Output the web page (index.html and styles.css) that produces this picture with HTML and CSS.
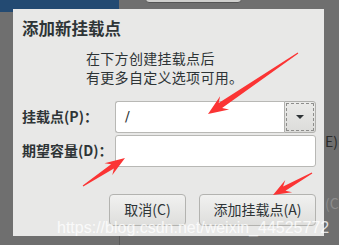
FILE: index.html
```html
<!DOCTYPE html>
<html lang="zh-CN">
<head>
    <meta charset="UTF-8">
    <title>添加新挂载点</title>
    <link rel="stylesheet" href="styles.css">
</head>
<body>
  <div class="desk">
    <!-- bits of the window underneath -->
    <div class="bg-bar"></div>
    <div class="bg-tab"></div>
    <div class="bg-line"></div>
    <span class="bg-text bg-e">E)</span>
    <span class="bg-text bg-c">(C</span>

    <div class="dialog">
      <h1 class="title">添加新挂载点</h1>
      <p class="intro">在下方创建挂载点后<br>有更多自定义选项可用。</p>

      <div class="form">
        <label class="label">挂载点(P)：</label>
        <div class="combo">
          <div class="combo-entry">/</div>
          <div class="combo-btn"><span class="caret"></span></div>
        </div>
        <label class="label">期望容量(D)：</label>
        <div class="entry"></div>
      </div>

      <div class="actions">
        <button class="btn btn-cancel">取消(C)</button>
        <button class="btn btn-add">添加挂载点(A)</button>
      </div>
    </div>

    <svg class="marks" width="339" height="245" viewBox="0 0 339 245">
      <polygon points="297.7,52.6 218.7,103.1 220.1,96.2 208,114 229.1,109.4 222.1,108.1 298.3,53.4" />
      <polygon points="83.3,186.4 113.9,168.4 112.3,174.9 125,158 104.5,163.3 111.1,164.2 82.7,185.6" />
      <polygon points="311.8,172.6 283.1,186.4 285.3,180.1 273,195 292.1,192.3 285.5,190.8 312.3,173.4" />
    </svg>

    <div class="watermark">https://blog.csdn.net/weixin_44525772</div>
  </div>
</body>
</html>
```

FILE: styles.css
```css
html, body {
    margin: 0;
    padding: 0;
  }

  body {
    font-family: "Noto Sans CJK SC", "DejaVu Sans", sans-serif;
    color: #2e3436;
  }

  .desk {
    position: relative;
    width: 339px;
    height: 245px;
    overflow: hidden;
    background: #6f6f6f;
  }

  .bg-bar {
    position: absolute;
    left: 0;
    top: 0;
    width: 119px;
    height: 12px;
    background: #234a72;
  }

  .bg-tab {
    position: absolute;
    left: 145px;
    top: -30px;
    width: 95px;
    height: 31px;
    border: 1px solid #555;
    border-radius: 4px;
    background: #cfcfcd;
  }

  .bg-line {
    position: absolute;
    left: 119px;
    top: 236px;
    width: 1px;
    height: 9px;
    background: #5a5a5a;
  }

  .bg-text {
    position: absolute;
    left: 325px;
    font-size: 14px;
    line-height: 16px;
  }

  .bg-e {
    top: 133px;
    color: #2a2a2a;
  }

  .bg-c {
    top: 195px;
    color: #8c8c8c;
  }

  .dialog {
    position: absolute;
    left: 13px;
    top: 9px;
    width: 311px;
    height: 227px;
    box-sizing: border-box;
    padding: 8px 8px 0 9px;
    background: #e8e8e7;
    display: flex;
    flex-direction: column;
  }

  .title {
    margin: 0;
    font-size: 16.5px;
    line-height: 22px;
    font-weight: bold;
  }

  .intro {
    margin: 10px 0 0 64px;
    font-size: 14px;
    line-height: 19px;
    letter-spacing: .3px;
  }

  .form {
    margin-top: 14px;
    display: grid;
    grid-template-columns: 93px 201px;
    grid-auto-rows: 32px;
    row-gap: 2px;
  }

  .label {
    display: flex;
    align-items: center;
    font-size: 14px;
    font-weight: bold;
    padding-bottom: 2px;
  }

  .combo {
    display: flex;
  }

  .combo-entry {
    flex: 1;
    box-sizing: border-box;
    border: 1px solid #b8b8b5;
    border-right: none;
    border-radius: 3px 0 0 3px;
    background: #fff;
    padding-left: 9px;
    font-family: "DejaVu Sans", sans-serif;
    font-size: 14px;
    line-height: 28px;
  }

  .combo-btn {
    width: 32px;
    box-sizing: border-box;
    border: 1px solid #b0b0ad;
    border-radius: 0 3px 3px 0;
    background: linear-gradient(#ebebe9, #dcdcda);
    outline: 1px dashed #8d8d8b;
    outline-offset: -3px;
    display: flex;
    align-items: center;
    justify-content: center;
  }

  .caret {
    width: 0;
    height: 0;
    border-left: 4px solid transparent;
    border-right: 4px solid transparent;
    border-top: 4px solid #2e3436;
  }

  .entry {
    box-sizing: border-box;
    border: 1px solid #b8b8b5;
    border-radius: 3px;
    background: #fff;
  }

  .actions {
    margin-top: 27px;
    display: flex;
    justify-content: flex-end;
    gap: 13px;
  }

  .btn {
    height: 32px;
    box-sizing: border-box;
    border: 1px solid #b3b3b0;
    border-radius: 4px;
    background: linear-gradient(#f1f1f0, #dededc);
    font-family: inherit;
    font-size: 14px;
    color: #2e3436;
    padding: 0 0 2px;
  }

  .btn-cancel {
    width: 77px;
  }

  .btn-add {
    width: 117px;
  }

  .marks {
    position: absolute;
    left: 0;
    top: 0;
    fill: #fb3434;
  }

  .watermark {
    position: absolute;
    left: 57px;
    top: 219px;
    font-family: "Liberation Sans", sans-serif;
    font-size: 16px;
    line-height: 18px;
    color: rgba(255, 255, 255, .8);
    white-space: nowrap;
  }
```
